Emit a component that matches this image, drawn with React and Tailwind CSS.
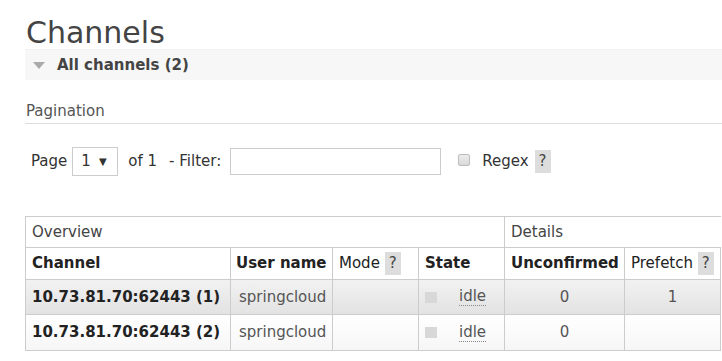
import { useState } from "react";

const channels = [
  { name: "10.73.81.70:62443 (1)", user: "springcloud", state: "idle", unconfirmed: 0, prefetch: 1 },
  { name: "10.73.81.70:62443 (2)", user: "springcloud", state: "idle", unconfirmed: 0, prefetch: "" },
];

const Help = () => (
  <span className="inline-block bg-[#ddd] text-[#444] px-[4px] leading-[23px] font-normal">?</span>
);

const App = () => {
  const [filter, setFilter] = useState("");

  return (
    <div className="w-[722px] h-[361px] overflow-hidden bg-white text-[#484848] text-[15px] font-['DejaVu_Sans',Verdana,sans-serif]">
      <div className="pl-[25px]">
        {/* Title */}
        <h1 className="text-[30px] leading-[33px] pt-[16px] pl-[1px] text-[#444]">Channels</h1>

        {/* Section header */}
        <div className="h-[31px] bg-[#f7f7f7] border-t border-[#f2f2f2] flex items-center">
          <span className="ml-[8px] w-0 h-0 border-l-[6px] border-r-[6px] border-t-[7px] border-l-transparent border-r-transparent border-t-[#aaa]" />
          <span className="ml-[12px] text-[15px] font-bold text-[#444]">All channels (2)</span>
        </div>

        {/* Pagination */}
        <div className="mt-[22px] pl-[1px] pb-[3px] leading-[18px] border-b border-[#ddd] text-[#555]">Pagination</div>

        <div className="flex items-center h-[29px] mt-[23px] pl-[6px] text-[#333]">
          <span>Page</span>
          <div className="ml-[5px] w-[46px] h-[29px] border border-[#ccc] flex items-center pl-[8px] gap-[8px]">
            <span>1</span>
            <span className="text-[10px]">▼</span>
          </div>
          <span className="ml-[10px]">of 1</span>
          <span className="ml-[12px]">- Filter:</span>
          <input
            value={filter}
            onChange={(e) => setFilter(e.target.value)}
            className="ml-[9px] w-[211px] h-[27px] border border-[#ccc] outline-none"
          />
          <span className="ml-[17px] mb-[4px] w-[12px] h-[12px] rounded-[2px] border border-[#bbb] bg-gradient-to-b from-[#eee] to-[#d8d8d8]" />
          <span className="ml-[12px]">Regex</span>
          <span className="ml-[6px]">
            <Help />
          </span>
        </div>

        {/* Table */}
        <table className="mt-[40px] border-collapse table-fixed w-[695px] whitespace-nowrap">
          <colgroup>
            <col className="w-[205px]" />
            <col className="w-[102px]" />
            <col className="w-[86px]" />
            <col className="w-[86px]" />
            <col className="w-[120px]" />
            <col className="w-[96px]" />
          </colgroup>
          <thead>
            <tr className="h-[31px]">
              <th colSpan={4} className="border border-[#ccc] text-left font-normal px-[6px] text-[#444]">
                Overview
              </th>
              <th colSpan={2} className="border border-[#ccc] border-r-0 text-left font-normal px-[6px] text-[#444]">
                Details
              </th>
            </tr>
            <tr className="h-[32px] text-[#222]">
              <th className="border border-[#ccc] text-left px-[6px]">Channel</th>
              <th className="border border-[#ccc] text-left px-[5px]">User name</th>
              <th className="border border-[#ccc] text-left px-[6px] font-normal">
                Mode <Help />
              </th>
              <th className="border border-[#ccc] text-left px-[6px]">State</th>
              <th className="border border-[#ccc] text-left px-[6px]">Unconfirmed</th>
              <th className="border border-[#ccc] text-left px-[6px] font-normal">
                Prefetch <Help />
              </th>
            </tr>
          </thead>
          <tbody>
            {channels.map((ch, i) => (
              <tr
                key={ch.name}
                className={
                  i === 0
                    ? "h-[35px] bg-gradient-to-b from-[#f2f2f2] to-[#e2e2e2]"
                    : "h-[36px] bg-gradient-to-b from-[#ffffff] to-[#f6f6f6]"
                }
              >
                <td className="border border-[#ccc] px-[6px] font-bold text-[#222]">{ch.name}</td>
                <td className="border border-[#ccc] px-[8px] text-[#555]">{ch.user}</td>
                <td className="border border-[#ccc]" />
                <td className="border border-[#ccc] px-[6px]">
                  <div className="flex items-center">
                    <span className="w-[12px] h-[11px] bg-[#d8d8d8]" />
                    <span className="ml-[22px] text-[#555] border-b border-dotted border-[#888] leading-[17px]">
                      {ch.state}
                    </span>
                  </div>
                </td>
                <td className="border border-[#ccc] text-center text-[#555]">{ch.unconfirmed}</td>
                <td className="border border-[#ccc] text-center text-[#555]">{ch.prefetch}</td>
              </tr>
            ))}
          </tbody>
        </table>
      </div>
    </div>
  );
};

export default App;
